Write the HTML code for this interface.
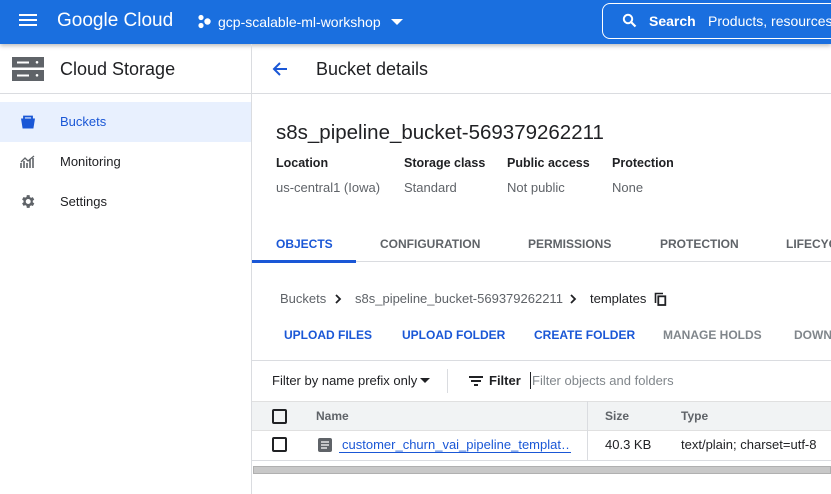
<!DOCTYPE html>
<html><head><meta charset="utf-8"><style>
*{margin:0;padding:0;box-sizing:border-box}
body{width:831px;height:494px;overflow:hidden;background:#fff;font-family:"Liberation Sans",Arial,sans-serif;position:relative;color:#202124}
.a{position:absolute;white-space:nowrap}
.hdr{position:absolute;left:0;top:0;width:831px;height:44px;background:#1a6fdf;box-shadow:0 2px 4px rgba(0,0,0,.25)}
.b{font-size:12px;font-weight:bold;color:#1a57d6}
.g{color:#5f6368}
.hl{position:absolute;height:1px;background:#dadce0}
</style></head><body>
<div class="hdr">
 <div class="a" style="left:19px;top:14px;width:18px;height:2px;background:#fff;box-shadow:0 5px 0 #fff,0 10px 0 #fff"></div>
 <div class="a" style="left:57px;top:10px;font-size:19px;color:#fff">Google Cloud</div>
 <svg class="a" style="left:197px;top:14px" width="16" height="16" viewBox="0 0 16 16"><circle cx="4" cy="3.5" r="2.6" fill="#fff"/><circle cx="4" cy="11.5" r="2.6" fill="#fff"/><circle cx="10.5" cy="7.5" r="3.2" fill="#fff"/></svg>
 <div class="a" style="left:218px;top:14px;font-size:14px;color:#fff">gcp-scalable-ml-workshop</div>
 <div class="a" style="left:391px;top:19px;border-left:6px solid transparent;border-right:6px solid transparent;border-top:6px solid #fff"></div>
 <div class="a" style="left:602px;top:3px;width:260px;height:36px;border:1px solid #fff;border-radius:8px"></div>
 <svg class="a" style="left:622px;top:13px" width="15" height="15" viewBox="0 0 15 15"><circle cx="6" cy="6" r="4.2" stroke="#fff" stroke-width="2" fill="none"/><path d="M9 9l4.5 4.5" stroke="#fff" stroke-width="2.2"/></svg>
 <div class="a" style="left:649px;top:13px;font-size:14px;color:#fff;font-weight:bold">Search</div>
 <div class="a" style="left:708px;top:13px;font-size:14px;color:#fff">Products, resources</div>
</div>
<div class="a" style="left:251px;top:44px;width:1px;height:450px;background:#dadce0"></div>
<div class="hl" style="left:0;top:93px;width:831px"></div>
<svg class="a" style="left:12px;top:57px" width="32" height="24" viewBox="0 0 32 24"><rect x="0" y="0" width="32" height="10.5" fill="#5f6368"/><rect x="0" y="13" width="32" height="11" fill="#5f6368"/><rect x="5" y="4.5" width="12" height="2" fill="#fff"/><rect x="5" y="17.5" width="12" height="2" fill="#fff"/><circle cx="25" cy="5.3" r="1.3" fill="#fff"/><circle cx="25" cy="18.3" r="1.3" fill="#fff"/></svg>
<div class="a" style="left:60px;top:59px;font-size:18px">Cloud Storage</div>
<div class="a" style="left:0;top:102px;width:251px;height:40px;background:#e8f0fe"></div>
<svg class="a" style="left:20px;top:114px" width="16" height="16" viewBox="0 0 16 16"><path d="M4 4.5V2.5h8v2" stroke="#1a57d6" stroke-width="1.8" fill="none"/><path d="M1 4.5h14l-1.6 10H2.6z" fill="#1a57d6"/></svg>
<div class="a" style="left:60px;top:114px;font-size:13px;color:#1a57d6">Buckets</div>
<svg class="a" style="left:20px;top:155px" width="16" height="14" viewBox="0 0 16 14"><path d="M1 13V8M4 13V6M7 13V8M10 13V4M13 13V3" stroke="#5f6368" stroke-width="1.6"/><path d="M1 7l4-4 3 3 6-5" stroke="#5f6368" stroke-width="1.3" fill="none"/></svg>
<div class="a" style="left:60px;top:154px;font-size:13px">Monitoring</div>
<svg class="a" style="left:19px;top:193px" width="17" height="17" viewBox="0 0 24 24"><path fill="#5f6368" d="M19.4 13a7.5 7.5 0 000-2l2.1-1.6-2-3.5-2.5 1a7 7 0 00-1.7-1L15 3h-4l-.4 2.6a7 7 0 00-1.7 1l-2.5-1-2 3.5L6.5 11a7.5 7.5 0 000 2l-2.1 1.6 2 3.5 2.5-1a7 7 0 001.7 1L11 21h4l.4-2.6a7 7 0 001.7-1l2.5 1 2-3.5zM13 15.5a3.5 3.5 0 110-7 3.5 3.5 0 010 7z"/></svg>
<div class="a" style="left:60px;top:194px;font-size:13px">Settings</div>
<svg class="a" style="left:271px;top:60px" width="18" height="18" viewBox="0 0 18 18"><path d="M16 9H3M9 3L3 9l6 6" stroke="#1a57d6" stroke-width="2" fill="none"/></svg>
<div class="a" style="left:316px;top:59px;font-size:18px">Bucket details</div>
<div class="a" style="left:276px;top:121px;font-size:20.5px">s8s_pipeline_bucket-569379262211</div>
<div class="a" style="left:276px;top:156px;font-size:12.5px;font-weight:bold">Location</div>
<div class="a g" style="left:276px;top:180px;font-size:13px">us-central1 (Iowa)</div>
<div class="a" style="left:404px;top:156px;font-size:12.5px;font-weight:bold">Storage class</div>
<div class="a g" style="left:404px;top:180px;font-size:13px">Standard</div>
<div class="a" style="left:507px;top:156px;font-size:12.5px;font-weight:bold">Public access</div>
<div class="a g" style="left:507px;top:180px;font-size:13px">Not public</div>
<div class="a" style="left:612px;top:156px;font-size:12.5px;font-weight:bold">Protection</div>
<div class="a g" style="left:612px;top:180px;font-size:13px">None</div>
<div class="a b" style="left:276px;top:237px">OBJECTS</div>
<div class="a g" style="left:380px;top:237px;font-size:12px;font-weight:bold">CONFIGURATION</div>
<div class="a g" style="left:528px;top:237px;font-size:12px;font-weight:bold">PERMISSIONS</div>
<div class="a g" style="left:660px;top:237px;font-size:12px;font-weight:bold">PROTECTION</div>
<div class="a g" style="left:786px;top:237px;font-size:12px;font-weight:bold">LIFECYCLE</div>
<div class="hl" style="left:252px;top:261px;width:579px"></div>
<div class="a" style="left:252px;top:260px;width:104px;height:3px;background:#1a57d6"></div>
<div class="a g" style="left:280px;top:291px;font-size:13px">Buckets</div>
<svg class="a" style="left:334px;top:294px" width="8" height="10" viewBox="0 0 8 10"><path d="M2 1l4 4-4 4" stroke="#202124" stroke-width="1.8" fill="none"/></svg>
<div class="a g" style="left:355px;top:291px;font-size:13px">s8s_pipeline_bucket-569379262211</div>
<svg class="a" style="left:569px;top:294px" width="8" height="10" viewBox="0 0 8 10"><path d="M2 1l4 4-4 4" stroke="#202124" stroke-width="1.8" fill="none"/></svg>
<div class="a" style="left:590px;top:291px;font-size:13px">templates</div>
<svg class="a" style="left:654px;top:292px" width="13" height="14" viewBox="0 0 13 14"><path d="M1.5 11V1.5H9" stroke="#202124" stroke-width="1.6" fill="none"/><rect x="4.3" y="4.3" width="7" height="8.7" stroke="#202124" stroke-width="1.8" fill="none"/></svg>
<div class="a b" style="left:284px;top:328px">UPLOAD FILES</div>
<div class="a b" style="left:402px;top:328px">UPLOAD FOLDER</div>
<div class="a b" style="left:534px;top:328px">CREATE FOLDER</div>
<div class="a" style="left:663px;top:328px;font-size:12px;font-weight:bold;color:#80868b">MANAGE HOLDS</div>
<div class="a" style="left:794px;top:328px;font-size:12px;font-weight:bold;color:#80868b">DOWNLOAD</div>
<div class="hl" style="left:252px;top:360px;width:579px"></div>
<div class="a" style="left:272px;top:373px;font-size:13px">Filter by name prefix only</div>
<div class="a" style="left:420px;top:378px;border-left:5px solid transparent;border-right:5px solid transparent;border-top:5px solid #202124"></div>
<div class="a" style="left:447px;top:369px;width:1px;height:24px;background:#dadce0"></div>
<div class="a" style="left:469px;top:376px;width:14px;height:2px;background:#202124"></div>
<div class="a" style="left:471px;top:380px;width:10px;height:2px;background:#202124"></div>
<div class="a" style="left:474px;top:384px;width:4px;height:2px;background:#202124"></div>
<div class="a" style="left:489px;top:373px;font-size:13px;font-weight:bold">Filter</div>
<div class="a" style="left:530px;top:372px;width:1px;height:17px;background:#202124"></div>
<div class="a" style="left:532px;top:373px;font-size:13px;color:#80868b">Filter objects and folders</div>
<div class="a" style="left:252px;top:401px;width:579px;height:30px;background:#f1f3f4;border-top:1px solid #e0e0e0;border-bottom:1px solid #e0e0e0"></div>
<div class="a" style="left:587px;top:401px;width:1px;height:59px;background:#dadce0"></div>
<div class="a" style="left:272px;top:409px;width:15px;height:15px;border:2px solid #202124;border-radius:2px"></div>
<div class="a g" style="left:316px;top:409px;font-size:12px;font-weight:bold">Name</div>
<div class="a g" style="left:605px;top:409px;font-size:12px;font-weight:bold">Size</div>
<div class="a g" style="left:681px;top:409px;font-size:12px;font-weight:bold">Type</div>
<div class="a" style="left:272px;top:437px;width:15px;height:15px;border:2px solid #202124;border-radius:2px"></div>
<svg class="a" style="left:318px;top:438px" width="14" height="14" viewBox="0 0 14 14"><rect width="14" height="14" rx="2" fill="#5f6368"/><path d="M3 4h8M3 7h8M3 10h6" stroke="#fff" stroke-width="1.2"/></svg>
<div class="a" style="left:339px;top:437px;font-size:13px;color:#1a57d6;border-bottom:1px solid #1a57d6;width:232px;overflow:hidden;padding-left:3px">customer_churn_vai_pipeline_templat…</div>
<div class="a" style="left:605px;top:437px;font-size:13px">40.3 KB</div>
<div class="a" style="left:681px;top:437px;font-size:13px">text/plain; charset=utf-8</div>
<div class="hl" style="left:252px;top:460px;width:579px"></div>
<div class="a" style="left:253px;top:466px;width:578px;height:8px;background:#c8c8c8;border:1px solid #b0b0b0"></div>
</body></html>
